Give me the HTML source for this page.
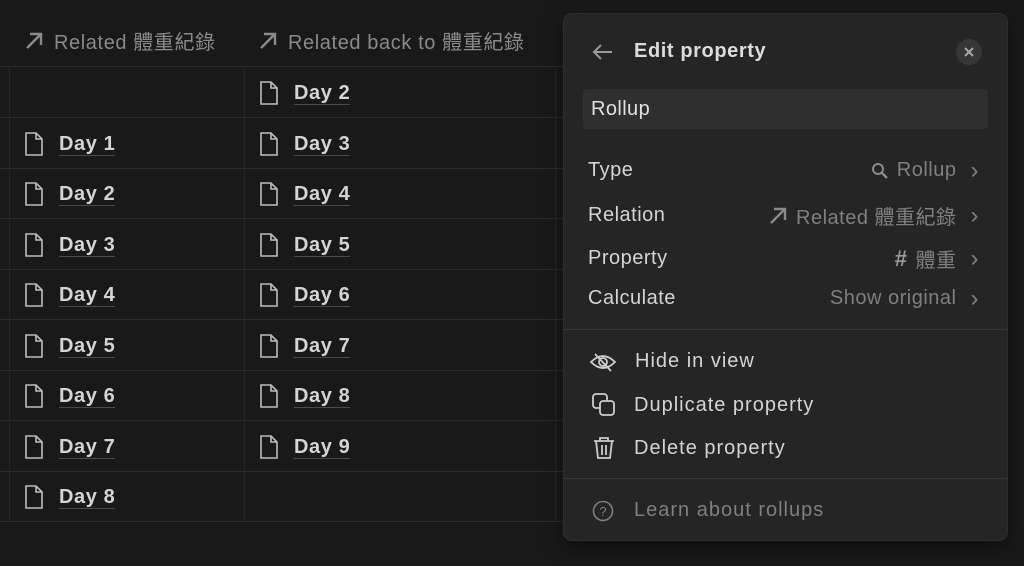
<!DOCTYPE html>
<html><head><meta charset="utf-8"><style>
body{margin:0;width:1024px;height:566px;background:#191919;overflow:hidden;position:relative;font-family:"Liberation Sans","Noto Sans CJK TC",sans-serif;}
.hd{position:absolute;top:26px;font-size:20px;color:#8a8a8a;white-space:nowrap;letter-spacing:.6px;display:flex;align-items:center;gap:10px}
.hl{position:absolute;left:0;width:564px;height:1px;background:#2c2c2c}
.vl{position:absolute;top:67px;width:1px;height:455px;background:#262626}
.cell{position:absolute;font-size:20px;color:#d4d4d4;font-weight:bold;display:flex;align-items:center;gap:15px;letter-spacing:.6px}
.cell span{border-bottom:1.5px solid #4a4a4a;line-height:22px}
.p{position:absolute;left:564px;top:14px;width:443px;height:526px;background:#252525;border-radius:8px;box-shadow:0 0 0 1px #2e2e2e,0 6px 20px rgba(0,0,0,.5);color:#d4d4d4}
.r{position:absolute;left:24px;right:28px;font-size:20px;letter-spacing:.5px;display:flex;justify-content:space-between;align-items:center}
.v{color:#7f7f7f;display:flex;align-items:center;gap:8px}
.ch{margin-left:6px;font-size:24px;line-height:20px}
.m{position:absolute;left:26px;font-size:20px;letter-spacing:1px;display:flex;align-items:center;gap:18px}
</style></head><body>
<svg width="0" height="0" style="position:absolute"><defs><symbol id="doc" viewBox="0 0 20 24"><path d="M2 1H12L18 7V23H2Z M12 1V7H18" fill="none" stroke="#bdbdbd" stroke-width="1.6"/></symbol><symbol id="arr" viewBox="0 0 20 20"><path d="M3 17L16 4M6 3H17V14" fill="none" stroke="#8a8a8a" stroke-width="2.4"/></symbol></defs></svg>
<div class="hd" style="left:24px"><svg width="20" height="20"><use href="#arr"/></svg>Related 體重紀錄</div>
<div class="hd" style="left:258px"><svg width="20" height="20"><use href="#arr"/></svg>Related back to 體重紀錄</div>
<div class="hl" style="top:66px"></div><div class="hl" style="top:117px"></div><div class="hl" style="top:168px"></div><div class="hl" style="top:218px"></div><div class="hl" style="top:269px"></div><div class="hl" style="top:319px"></div><div class="hl" style="top:370px"></div><div class="hl" style="top:420px"></div><div class="hl" style="top:471px"></div><div class="hl" style="top:521px"></div>
<div class="vl" style="left:9px"></div><div class="vl" style="left:244px"></div><div class="vl" style="left:555px"></div>
<div class="cell" style="left:259px;top:81px"><svg width="20" height="24"><use href="#doc"/></svg><span>Day 2</span></div>
<div class="cell" style="left:24px;top:132px"><svg width="20" height="24"><use href="#doc"/></svg><span>Day 1</span></div>
<div class="cell" style="left:259px;top:132px"><svg width="20" height="24"><use href="#doc"/></svg><span>Day 3</span></div>
<div class="cell" style="left:24px;top:182px"><svg width="20" height="24"><use href="#doc"/></svg><span>Day 2</span></div>
<div class="cell" style="left:259px;top:182px"><svg width="20" height="24"><use href="#doc"/></svg><span>Day 4</span></div>
<div class="cell" style="left:24px;top:233px"><svg width="20" height="24"><use href="#doc"/></svg><span>Day 3</span></div>
<div class="cell" style="left:259px;top:233px"><svg width="20" height="24"><use href="#doc"/></svg><span>Day 5</span></div>
<div class="cell" style="left:24px;top:283px"><svg width="20" height="24"><use href="#doc"/></svg><span>Day 4</span></div>
<div class="cell" style="left:259px;top:283px"><svg width="20" height="24"><use href="#doc"/></svg><span>Day 6</span></div>
<div class="cell" style="left:24px;top:334px"><svg width="20" height="24"><use href="#doc"/></svg><span>Day 5</span></div>
<div class="cell" style="left:259px;top:334px"><svg width="20" height="24"><use href="#doc"/></svg><span>Day 7</span></div>
<div class="cell" style="left:24px;top:384px"><svg width="20" height="24"><use href="#doc"/></svg><span>Day 6</span></div>
<div class="cell" style="left:259px;top:384px"><svg width="20" height="24"><use href="#doc"/></svg><span>Day 8</span></div>
<div class="cell" style="left:24px;top:435px"><svg width="20" height="24"><use href="#doc"/></svg><span>Day 7</span></div>
<div class="cell" style="left:259px;top:435px"><svg width="20" height="24"><use href="#doc"/></svg><span>Day 9</span></div>
<div class="cell" style="left:24px;top:485px"><svg width="20" height="24"><use href="#doc"/></svg><span>Day 8</span></div>
<div class="p">
 <svg style="position:absolute;left:28px;top:29px" width="22" height="18" viewBox="0 0 22 18"><path d="M20 9H2M9 2L2 9L9 16" fill="none" stroke="#9a9a9a" stroke-width="2"/></svg>
 <div style="position:absolute;left:70px;top:26px;font-size:20px;font-weight:bold;color:#dcdcdc;letter-spacing:.6px">Edit property</div>
 <div style="position:absolute;left:392px;top:25px;width:26px;height:26px;border-radius:50%;background:#363636"><svg width="26" height="26" viewBox="0 0 26 26"><path d="M9 9L17 17M17 9L9 17" stroke="#a8a8a8" stroke-width="2"/></svg></div>
 <div style="position:absolute;left:19px;top:75px;width:405px;height:40px;background:#2f2f2f;border-radius:4px;font-size:20px;line-height:40px;padding-left:8px;box-sizing:border-box;color:#e0e0e0;letter-spacing:.4px">Rollup</div>
 <div class="r" style="top:145px"><span>Type</span><span class="v"><svg width="18" height="18" viewBox="0 0 18 18"><circle cx="7" cy="7" r="5" fill="none" stroke="#8a8a8a" stroke-width="2"/><path d="M11 11L16 16" stroke="#8a8a8a" stroke-width="2.4"/></svg>Rollup<span class="ch">›</span></span></div>
 <div class="r" style="top:187px"><span>Relation</span><span class="v"><svg width="20" height="20"><use href="#arr"/></svg>Related 體重紀錄<span class="ch">›</span></span></div>
 <div class="r" style="top:230px"><span>Property</span><span class="v"><b style="color:#999;font-size:22px">#</b>體重<span class="ch">›</span></span></div>
 <div class="r" style="top:273px"><span>Calculate</span><span class="v">Show original<span class="ch">›</span></span></div>
 <div style="position:absolute;left:0;right:0;top:315px;height:1px;background:#363636"></div>
 <div class="m" style="top:336px;left:25px"><svg width="28" height="20" viewBox="0 0 28 20"><path d="M2 10Q14 -2 26 10Q14 22 2 10Z" fill="none" stroke="#ccc" stroke-width="1.8"/><circle cx="14" cy="10" r="4" fill="none" stroke="#ccc" stroke-width="1.8"/><path d="M6 2L22 19" stroke="#ccc" stroke-width="1.8"/></svg>Hide in view</div>
 <div class="m" style="top:379px;left:28px"><svg width="24" height="24" viewBox="0 0 24 24"><rect x="1" y="1" width="14" height="14" rx="3" fill="none" stroke="#ccc" stroke-width="1.8"/><rect x="8" y="8" width="14" height="14" rx="3" fill="#252525" stroke="#ccc" stroke-width="1.8"/></svg>Duplicate property</div>
 <div class="m" style="top:422px;left:28px"><svg width="24" height="24" viewBox="0 0 24 24"><path d="M2 5H22M8 5V2H16V5M4 5L6 22H18L20 5M10 9V19M14 9V19" fill="none" stroke="#ccc" stroke-width="1.8"/></svg>Delete property</div>
 <div style="position:absolute;left:0;right:0;top:464px;height:1px;background:#363636"></div>
 <div class="m" style="top:485px;left:28px;color:#7f7f7f;gap:20px"><svg width="22" height="22" viewBox="0 0 22 22"><circle cx="11" cy="11" r="9.5" fill="none" stroke="#7f7f7f" stroke-width="1.6"/><text x="11" y="16" font-size="13" text-anchor="middle" fill="#7f7f7f" font-family="Liberation Sans" letter-spacing="0">?</text></svg>Learn about rollups</div>
</div>
</body></html>
